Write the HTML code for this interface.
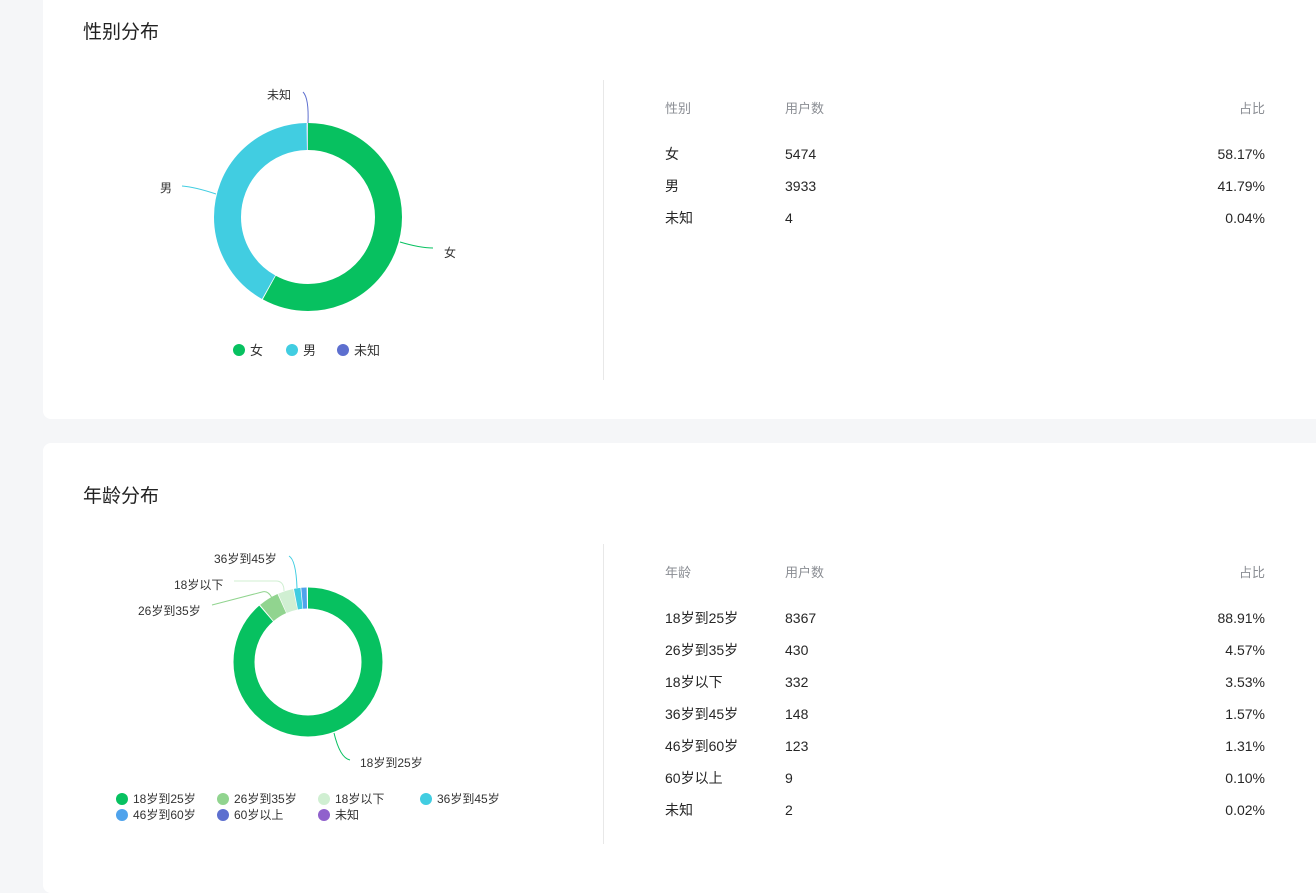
<!DOCTYPE html>
<html><head><meta charset="utf-8"><style>
body{margin:0;width:1316px;height:877px;background:#f5f6f8;font-family:"Liberation Sans","Noto Sans CJK SC",sans-serif;overflow:hidden;position:relative}
.card{position:absolute;left:43px;width:1290px;background:#fff;border-radius:8px}
.t{position:absolute;font-size:19px;color:#222}
.row{position:absolute;left:665px;width:600px;height:20px;line-height:20px;white-space:nowrap}
.row span{position:absolute;top:0}
.row .a{left:0}.row .b{left:120px}.row .c{right:0}
.h{font-size:13px;color:#8a8d93}
.r{font-size:14px;color:#262626}
.div{position:absolute;left:603px;width:1px;background:#e8e8e8}
svg{position:absolute;left:0;top:0}
</style></head><body>
<div class="card" style="top:-10px;height:429px"></div>
<div class="card" style="top:443px;height:450px"></div>
<div class="t" style="left:83px;top:17px">性别分布</div>
<div class="t" style="left:83px;top:481px">年龄分布</div>
<div class="div" style="top:80px;height:300px"></div>
<div class="div" style="top:544px;height:300px"></div>

<svg width="1316" height="877" font-family="Liberation Sans, Noto Sans CJK SC, sans-serif" font-size="12" fill="#333">
<g transform="rotate(-90 308 217)">
<circle cx="308" cy="217" r="80.5" fill="none" stroke="#07c160" stroke-width="27" pathLength="100" stroke-dasharray="58.05 100" stroke-dashoffset="0"/>
<circle cx="308" cy="217" r="80.5" fill="none" stroke="#41cde1" stroke-width="27" pathLength="100" stroke-dasharray="41.65 100" stroke-dashoffset="-58.22"/>
<circle cx="308" cy="217" r="80.5" fill="none" stroke="#5d6fcf" stroke-width="27" pathLength="100" stroke-dasharray="0.05 100" stroke-dashoffset="-99.93"/>
</g>
<path d="M400 242 Q420 248 433 248" stroke="#07c160" fill="none"/>
<path d="M216 194 Q195 187 182 186" stroke="#41cde1" fill="none"/>
<path d="M308 123 Q309 98 303 92" stroke="#5d6fcf" fill="none"/>
<text x="444" y="257">女</text><text x="160" y="192">男</text><text x="267" y="99">未知</text>
<circle cx="239" cy="350" r="6" fill="#07c160"/><text x="250" y="355" font-size="13">女</text>
<circle cx="292" cy="350" r="6" fill="#41cde1"/><text x="303" y="355" font-size="13">男</text>
<circle cx="343" cy="350" r="6" fill="#5d6fcf"/><text x="354" y="355" font-size="13">未知</text>

<g transform="rotate(-90 308 662)">
<circle cx="308" cy="662" r="64" fill="none" stroke="#07c160" stroke-width="21" pathLength="100" stroke-dasharray="88.75 100"/>
<circle cx="308" cy="662" r="64" fill="none" stroke="#91d48f" stroke-width="21" pathLength="100" stroke-dasharray="4.4 100" stroke-dashoffset="-89.0"/>
<circle cx="308" cy="662" r="64" fill="none" stroke="#d0efd2" stroke-width="21" pathLength="100" stroke-dasharray="3.35 100" stroke-dashoffset="-93.57"/>
<circle cx="308" cy="662" r="64" fill="none" stroke="#41cde1" stroke-width="21" pathLength="100" stroke-dasharray="1.4 100" stroke-dashoffset="-97.1"/>
<circle cx="308" cy="662" r="64" fill="none" stroke="#4fa3ec" stroke-width="21" pathLength="100" stroke-dasharray="1.15 100" stroke-dashoffset="-98.67"/>
</g>
<path d="M334 733 Q340 758 350 760" stroke="#07c160" fill="none"/>
<path d="M272 598 Q268 590 262 592 L212 605" stroke="#91d48f" fill="none"/>
<path d="M284 591 Q284 581 276 581 L234 581" stroke="#d0efd2" fill="none"/>
<path d="M297 588 Q296 560 289 556" stroke="#41cde1" fill="none"/>
<text x="360" y="767">18岁到25岁</text>
<text x="138" y="615">26岁到35岁</text>
<text x="174" y="589">18岁以下</text>
<text x="214" y="563">36岁到45岁</text>
<circle cx="122" cy="799" r="6" fill="#07c160"/><text x="133" y="803">18岁到25岁</text>
<circle cx="223" cy="799" r="6" fill="#91d48f"/><text x="234" y="803">26岁到35岁</text>
<circle cx="324" cy="799" r="6" fill="#d0efd2"/><text x="335" y="803">18岁以下</text>
<circle cx="426" cy="799" r="6" fill="#41cde1"/><text x="437" y="803">36岁到45岁</text>
<circle cx="122" cy="815" r="6" fill="#4fa3ec"/><text x="133" y="819">46岁到60岁</text>
<circle cx="223" cy="815" r="6" fill="#5d6fcf"/><text x="234" y="819">60岁以上</text>
<circle cx="324" cy="815" r="6" fill="#9061cc"/><text x="335" y="819">未知</text>
</svg>

<div class="row h" style="top:99px"><span class="a">性别</span><span class="b">用户数</span><span class="c">占比</span></div>
<div class="row r" style="top:144px"><span class="a">女</span><span class="b">5474</span><span class="c">58.17%</span></div>
<div class="row r" style="top:176px"><span class="a">男</span><span class="b">3933</span><span class="c">41.79%</span></div>
<div class="row r" style="top:208px"><span class="a">未知</span><span class="b">4</span><span class="c">0.04%</span></div>

<div class="row h" style="top:563px"><span class="a">年龄</span><span class="b">用户数</span><span class="c">占比</span></div>
<div class="row r" style="top:608px"><span class="a">18岁到25岁</span><span class="b">8367</span><span class="c">88.91%</span></div>
<div class="row r" style="top:640px"><span class="a">26岁到35岁</span><span class="b">430</span><span class="c">4.57%</span></div>
<div class="row r" style="top:672px"><span class="a">18岁以下</span><span class="b">332</span><span class="c">3.53%</span></div>
<div class="row r" style="top:704px"><span class="a">36岁到45岁</span><span class="b">148</span><span class="c">1.57%</span></div>
<div class="row r" style="top:736px"><span class="a">46岁到60岁</span><span class="b">123</span><span class="c">1.31%</span></div>
<div class="row r" style="top:768px"><span class="a">60岁以上</span><span class="b">9</span><span class="c">0.10%</span></div>
<div class="row r" style="top:800px"><span class="a">未知</span><span class="b">2</span><span class="c">0.02%</span></div>
</body></html>
